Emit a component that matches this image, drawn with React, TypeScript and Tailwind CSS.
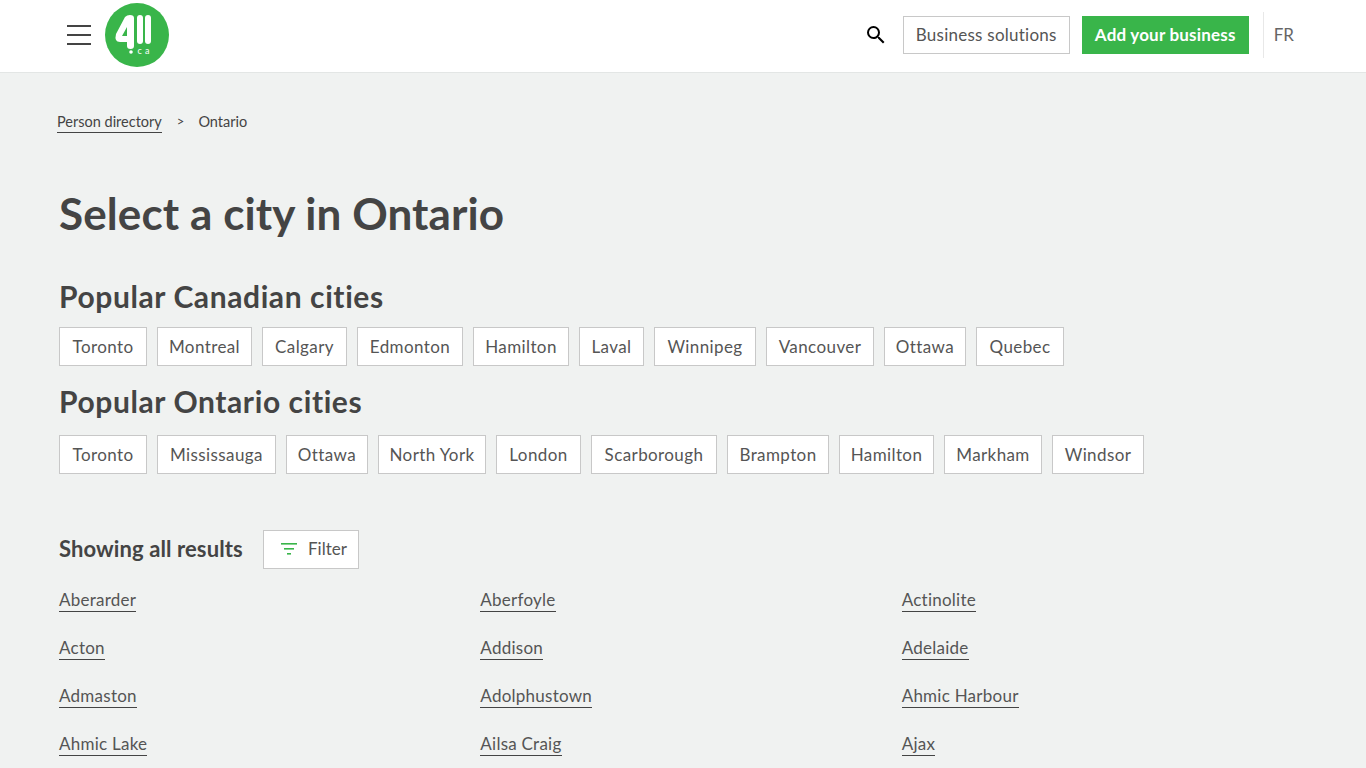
import { MdSearch } from "react-icons/md";

const font = "font-['Lato','Noto_Sans',sans-serif]";

const canadian = [
  { name: "Toronto", w: "w-[88px]" },
  { name: "Montreal", w: "w-[95px]" },
  { name: "Calgary", w: "w-[85px]" },
  { name: "Edmonton", w: "w-[106px]" },
  { name: "Hamilton", w: "w-[96px]" },
  { name: "Laval", w: "w-[65px]" },
  { name: "Winnipeg", w: "w-[102px]" },
  { name: "Vancouver", w: "w-[108px]" },
  { name: "Ottawa", w: "w-[82px]" },
  { name: "Quebec", w: "w-[88px]" },
];

const ontario = [
  { name: "Toronto", w: "w-[88px]" },
  { name: "Mississauga", w: "w-[119px]" },
  { name: "Ottawa", w: "w-[82px]" },
  { name: "North York", w: "w-[108px]" },
  { name: "London", w: "w-[85px]" },
  { name: "Scarborough", w: "w-[126px]" },
  { name: "Brampton", w: "w-[102px]" },
  { name: "Hamilton", w: "w-[95px]" },
  { name: "Markham", w: "w-[98px]" },
  { name: "Windsor", w: "w-[92px]" },
];

const results = [
  "Aberarder", "Aberfoyle", "Actinolite",
  "Acton", "Addison", "Adelaide",
  "Admaston", "Adolphustown", "Ahmic Harbour",
  "Ahmic Lake", "Ailsa Craig", "Ajax",
];

const Logo = () => (
  <svg viewBox="0 0 64 64" className="w-16 h-16 shrink-0">
    <circle cx="32" cy="32" r="32" fill="#39b54a" />
    <path
      d="M20 14 L11 31 Q9 39 15 39 H22 V43 Q22 46 25.5 46 Q29 46 29 43 V15 Q29 12 25 12 Q22 12 20 14 Z M22 24 V33 H17 Z"
      fill="#fff"
      fillRule="evenodd"
    />
    <rect x="32" y="12" width="6" height="29" rx="3" fill="#fff" />
    <rect x="40" y="12" width="6" height="29" rx="3" fill="#fff" />
    <circle cx="26" cy="49" r="1.8" fill="#fff" />
    <text x="32.5" y="50.5" fontSize="9" fill="#fff" fontFamily="Lato, sans-serif">
      c
    </text>
    <text x="40" y="50.5" fontSize="9" fill="#fff" fontFamily="Lato, sans-serif">
      a
    </text>
  </svg>
);

const Chip = ({ name, w }: { name: string; w: string }) => (
  <a className={`${w} h-[39px] pt-[1px] flex items-center justify-center bg-white border border-[#c8c8c8] text-[17px] tracking-[0.4px] text-[#555555]`}>
    {name}
  </a>
);

export default function App() {
  return (
    <div className={`${font} min-h-screen h-[768px] overflow-hidden bg-[#f0f2f1] text-[#444444]`}>
      <header className="h-[73px] pb-[2px] bg-white border-b border-[#e3e6e5] flex items-center pl-[67px] pr-[72px]">
        <div className="flex flex-col gap-[7px] w-6 mr-[14px]">
          <span className="h-[2px] bg-[#444444]" />
          <span className="h-[2px] bg-[#444444]" />
          <span className="h-[2px] bg-[#444444]" />
        </div>
        <Logo />
        <div className="ml-auto flex items-center">
          <MdSearch className="w-6 h-6 text-black mr-[15px]" />
          <a className="w-[167px] h-[38px] flex items-center justify-center border border-[#c8c8c8] text-[17px] tracking-[0.25px] text-[#555555]">
            Business solutions
          </a>
          <a className="w-[167px] h-[38px] ml-3 flex items-center justify-center bg-[#39b54a] text-white text-[17px] font-bold tracking-[0.2px]">
            Add your business
          </a>
          <div className="h-[46px] w-px bg-[#e8e8e8] ml-[14px] mr-[10px]" />
          <span className="text-[17px] text-[#666666]">FR</span>
        </div>
      </header>

      <main className="pl-[59px] pr-[43px]">
        <nav className="flex items-center pt-[38px] -ml-[2px] text-[14.5px] text-[#444444]">
          <a className="border-b border-[#444444] leading-[21px]">Person directory</a>
          <span className="ml-[15px] mr-[14px] text-[13px]">&gt;</span>
          <span>Ontario</span>
        </nav>

        <h1 className="text-[44px] font-bold leading-[50px] mt-[55px] tracking-[0.1px]">Select a city in Ontario</h1>

        <h2 className="text-[30px] font-bold leading-[36px] mt-[40px] tracking-[0.6px]">Popular Canadian cities</h2>
        <div className="flex gap-[10px] mt-[13px]">
          {canadian.map((c) => (
            <Chip key={c.name} name={c.name} w={c.w} />
          ))}
        </div>

        <h2 className="text-[30px] font-bold leading-[36px] mt-[17px] tracking-[0.6px]">Popular Ontario cities</h2>
        <div className="flex gap-[10px] mt-[16px]">
          {ontario.map((c) => (
            <Chip key={c.name} name={c.name} w={c.w} />
          ))}
        </div>

        <div className="flex items-center mt-[56px]">
          <span className="text-[22px] font-bold w-[204px] pb-[2px] tracking-[0.1px]">Showing all results</span>
          <a className="w-[96px] h-[39px] pl-[17px] pb-[1px] flex items-center gap-[11px] bg-white border border-[#c8c8c8] text-[17px] text-[#555555]">
            <svg viewBox="0 0 16 12" className="w-4 h-3" fill="#39b54a">
              <rect x="0" y="0" width="16" height="1.6" />
              <rect x="3" y="5" width="10" height="1.6" />
              <rect x="6" y="10" width="4" height="1.6" />
            </svg>
            Filter
          </a>
        </div>

        <div className="grid grid-cols-3 gap-y-[24px] mt-[19px]">
          {results.map((r) => (
            <div key={r} className="h-[24px]">
              <a className="inline-block border-b border-[#444444] text-[17px] leading-[22px] tracking-[0.25px] text-[#555555]">
                {r}
              </a>
            </div>
          ))}
        </div>
      </main>
    </div>
  );
}
